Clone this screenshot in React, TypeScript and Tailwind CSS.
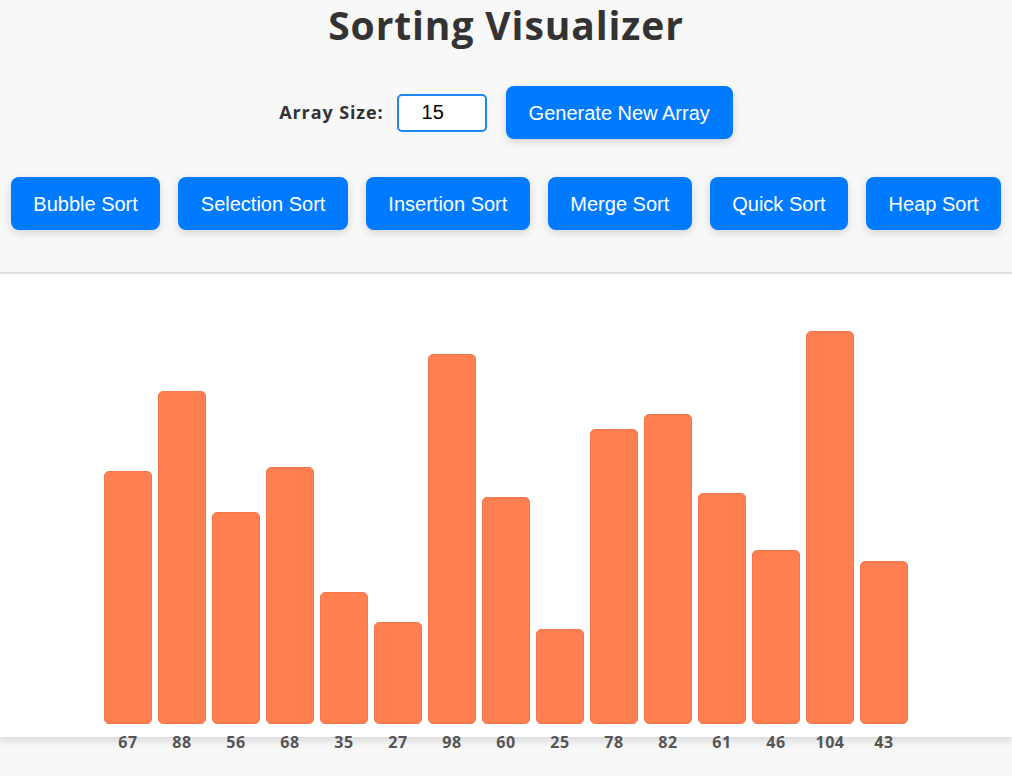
import React from "react";

const values = [67, 88, 56, 68, 35, 27, 98, 60, 25, 78, 82, 61, 46, 104, 43];
const sorts = ["Bubble Sort", "Selection Sort", "Insertion Sort", "Merge Sort", "Quick Sort", "Heap Sort"];

export default function App() {
  return (
    <div className="min-h-[776px] bg-[#f8f8f8]">
      <header className="border-b-2 border-[#e2e2e2] pb-[42px]">
        <h1 className="text-center text-[39px] leading-[50px] font-bold text-[#333] font-['Open_Sans',sans-serif] tracking-[0.9px]">
          Sorting Visualizer
        </h1>
        <div className="mt-[36px] flex items-center justify-center">
          <label className="text-[18px] font-bold text-[#333] font-['Open_Sans',sans-serif] tracking-[0.9px] mr-[13px]">Array Size:</label>
          <input
            defaultValue="15"
            className="w-[90px] h-[38px] border-2 border-[#1e86f0] rounded-[5px] bg-white pl-[23px] text-[20px] text-black font-['Liberation_Sans',Arial,sans-serif] outline-none"
          />
          <button className="ml-[19px] h-[53px] px-[23px] rounded-[8px] bg-[#007bff] text-white text-[20px] font-['Liberation_Sans',Arial,sans-serif] shadow-[0_3px_8px_rgba(0,0,0,0.15)]">
            Generate New Array
          </button>
        </div>
        <div className="mt-[38px] flex flex-wrap justify-center gap-[18px]">
          {sorts.map((s) => (
            <button
              key={s}
              className="h-[53px] px-[22.5px] rounded-[8px] bg-[#007bff] text-white text-[20px] font-['Liberation_Sans',Arial,sans-serif] shadow-[0_3px_8px_rgba(0,0,0,0.15)]"
            >
              {s}
            </button>
          ))}
        </div>
      </header>
      <div className="bg-white h-[463px] shadow-[0_4px_8px_rgba(0,0,0,0.12)] flex items-end justify-center gap-[6px] pb-[13px]">
        {values.map((v, i) => (
          <div key={i} className="flex flex-col items-center mb-[-30px]">
            <div
              className="w-[48px] bg-[#ff7f50] border border-[#f4764a] rounded-[5px]"
              style={{ height: Math.round(v * 3.78) }}
            />
            <div className="mt-[6px] leading-[24px] text-[16px] font-bold text-[#555] font-['Open_Sans',sans-serif] tracking-[0.5px]">
              {v}
            </div>
          </div>
        ))}
      </div>
    </div>
  );
}
